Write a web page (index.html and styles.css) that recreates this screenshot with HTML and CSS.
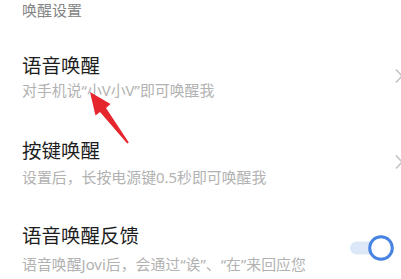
FILE: index.html
```html
<!DOCTYPE html>
<html lang="zh-CN">
<head>
<meta charset="utf-8">
<link rel="stylesheet" href="styles.css">
</head>
<body>
<div class="page">
  <div class="section-title">唤醒设置</div>
  <div class="row">
    <div class="text">
      <div class="title">语音唤醒</div>
      <div class="sub">对手机说“小V小V”即可唤醒我</div>
    </div>
    <svg class="chevron" width="8" height="16" viewBox="0 0 8 16"><path d="M1 1.5 L7 8 L1 14.5" fill="none" stroke="#c4c4c4" stroke-width="1.6"/></svg>
  </div>
  <div class="row">
    <div class="text">
      <div class="title">按键唤醒</div>
      <div class="sub sub-mid">设置后，长按电源键0.5秒即可唤醒我</div>
    </div>
    <svg class="chevron" width="8" height="16" viewBox="0 0 8 16"><path d="M1 1.5 L7 8 L1 14.5" fill="none" stroke="#c4c4c4" stroke-width="1.6"/></svg>
  </div>
  <div class="row">
    <div class="text">
      <div class="title">语音唤醒反馈</div>
      <div class="sub sub-wide">语音唤醒Jovi后，会通过“诶”、“在”来回应您</div>
    </div>
    <svg class="toggle" width="44" height="28" viewBox="0 0 44 28"><rect x="0" y="7.5" width="34" height="13" rx="6.5" fill="#dce8f7"/><circle cx="31" cy="14" r="11.3" fill="#fff" stroke="#4683e2" stroke-width="3"/></svg>
  </div>
  <svg class="arrow" width="401" height="279" viewBox="0 0 401 279"><polygon points="90,92 110.5,104 106,108 128.8,142.4 127.2,143.6 100,112 95.5,115.5" fill="#e5262d"/></svg>
</div>
</body>
</html>
```
FILE: styles.css
```css
html, body {
  margin: 0;
  padding: 0;
  background: #ffffff;
  overflow: hidden;
}
.page {
  position: relative;
  width: 401px;
  height: 279px;
  padding-left: 22px;
  box-sizing: border-box;
  font-family: "Noto Sans CJK SC", "Noto Sans", sans-serif;
}
.section-title {
  font-size: 15px;
  line-height: 20px;
  color: #858585;
  margin-bottom: 13px;
}
.row {
  height: 86px;
  display: flex;
  align-items: center;
  justify-content: space-between;
}
.title {
  font-size: 19.5px;
  line-height: 26px;
  color: #1e1e1e;
}
.sub {
  font-family: "Noto Sans", "Noto Sans CJK SC", sans-serif;
  font-size: 14.9px;
  line-height: 20px;
  color: #b2b2b2;
  margin-top: 2px;
}
.sub-mid {
  margin-top: 4px;
}
.sub-wide {
  margin-top: 6px;
}
.chevron {
  flex: none;
  margin-right: -2px;
}
.toggle {
  flex: none;
  margin-right: 7px;
}
.arrow {
  position: absolute;
  left: 0;
  top: 0;
  pointer-events: none;
}
```
